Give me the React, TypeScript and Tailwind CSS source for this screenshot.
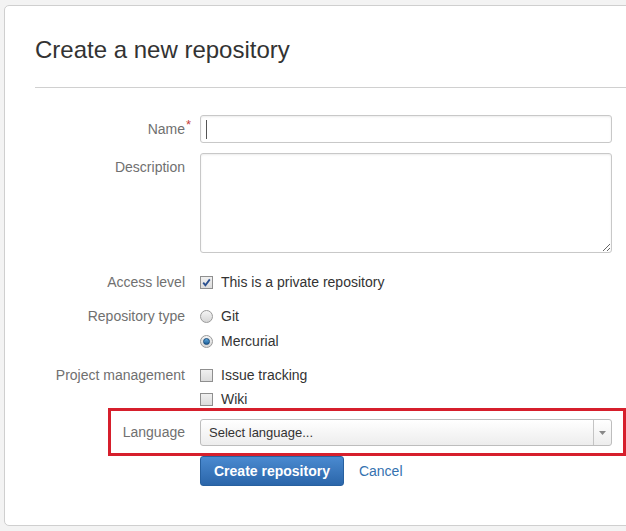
import React from 'react';

const font = { fontFamily: '"Liberation Sans", Arial, sans-serif' };

function Checkbox({ checked }: { checked?: boolean }) {
  return (
    <span className="relative inline-block w-[13px] h-[13px] border border-[#8f8f8f] bg-gradient-to-b from-[#f0f0f0] to-[#dcdcdc] shrink-0">
      {checked && (
        <svg viewBox="0 0 11 11" className="absolute inset-0 w-[11px] h-[11px]">
          <path d="M2.2 5.6 L4.4 8.2 L8.8 2.4" fill="none" stroke="#2a4f8f" strokeWidth="1.8" />
        </svg>
      )}
    </span>
  );
}

function Radio({ checked }: { checked?: boolean }) {
  return (
    <span className="relative inline-flex items-center justify-center w-[13px] h-[13px] rounded-full border border-[#9a9a9a] bg-gradient-to-b from-[#f4f4f4] to-[#d6d6d6] shrink-0">
      {checked && <span className="w-[7px] h-[7px] rounded-full bg-gradient-to-b from-[#5fa8dc] to-[#1d5f99] border border-[#174a7a]" />}
    </span>
  );
}

function Label({ children, className = '' }: { children: React.ReactNode; className?: string }) {
  return <div className={`w-[150px] shrink-0 text-right text-[14px] leading-[20px] text-[#707070] ${className}`}>{children}</div>;
}

function Option({ control, text }: { control: React.ReactNode; text: string }) {
  return (
    <div className="flex items-center gap-[8px] text-[14px] leading-[20px] text-[#333]">
      {control}
      <span>{text}</span>
    </div>
  );
}

export default function App() {
  return (
    <div className="relative w-[626px] h-[531px] overflow-hidden bg-[#f3f3f3] pt-[5px] pl-[4px]" style={font}>
      <div className="w-[660px] h-[521px] bg-white border border-[#cfcfcf] rounded-[5px]">
        <h1 className="ml-[30px] mt-[29px] text-[24px] leading-[29px] text-[#333]">Create a new repository</h1>
        <div className="ml-[30px] mt-[23px] border-t border-[#d0d0d0]" />

        <div className="ml-[30px] mt-[27px] flex flex-col">
          <div className="flex gap-[15px]">
            <Label className="pt-[4px] relative">
              Name<span className="absolute -right-[6px] top-[0px] text-[#c5413a] text-[13px]">*</span>
            </Label>
            <div className="relative w-[412px] h-[28px] border border-[#c8c8c8] rounded-[3px] shadow-[inset_0_1px_2px_rgba(0,0,0,0.08)]">
              <span className="absolute left-[5px] top-[4px] w-px h-[19px] bg-[#555]" />
            </div>
          </div>

          <div className="flex gap-[15px] mt-[10px]">
            <Label className="pt-[4px]">Description</Label>
            <textarea className="w-[412px] h-[100px] border border-[#c8c8c8] rounded-[3px] shadow-[inset_0_1px_2px_rgba(0,0,0,0.08)] outline-none" />
          </div>

          <div className="flex gap-[15px] mt-[19px]">
            <Label>Access level</Label>
            <Option control={<Checkbox checked />} text="This is a private repository" />
          </div>

          <div className="flex gap-[15px] mt-[14px]">
            <Label>Repository type</Label>
            <div className="flex flex-col gap-[5px]">
              <Option control={<Radio />} text="Git" />
              <Option control={<Radio checked />} text="Mercurial" />
            </div>
          </div>

          <div className="flex gap-[15px] mt-[14px]">
            <Label>Project management</Label>
            <div className="flex flex-col gap-[4px]">
              <Option control={<Checkbox />} text="Issue tracking" />
              <Option control={<Checkbox />} text="Wiki" />
            </div>
          </div>

          <div className="flex gap-[15px] mt-[10px]">
            <Label className="pt-[3px]">Language</Label>
            <div className="flex w-[412px] h-[27px] border border-[#bdbdbd] rounded-[3px] bg-gradient-to-b from-white to-[#ededed]">
              <span className="flex-1 pl-[8px] text-[13px] leading-[25px] text-[#333]">Select language...</span>
              <span className="w-[18px] border-l border-[#c4c4c4] flex items-center justify-center">
                <svg viewBox="0 0 7 4" className="w-[7px] h-[4px]">
                  <path d="M0 0 H7 L3.5 4 Z" fill="#888" />
                </svg>
              </span>
            </div>
          </div>

          <div className="flex items-center mt-[10px] ml-[165px] gap-[15px]">
            <button className="h-[30px] px-[13px] rounded-[3px] border border-[#27609f] bg-gradient-to-b from-[#4a8ad0] to-[#2b66aa] text-white text-[14px] font-bold">
              Create repository
            </button>
            <span className="text-[14px] text-[#3572b0]">Cancel</span>
          </div>
        </div>
      </div>

      <div className="absolute left-[108px] top-[408px] w-[518px] h-[48px] border-[3px] border-[#d61f2c]" />
    </div>
  );
}
